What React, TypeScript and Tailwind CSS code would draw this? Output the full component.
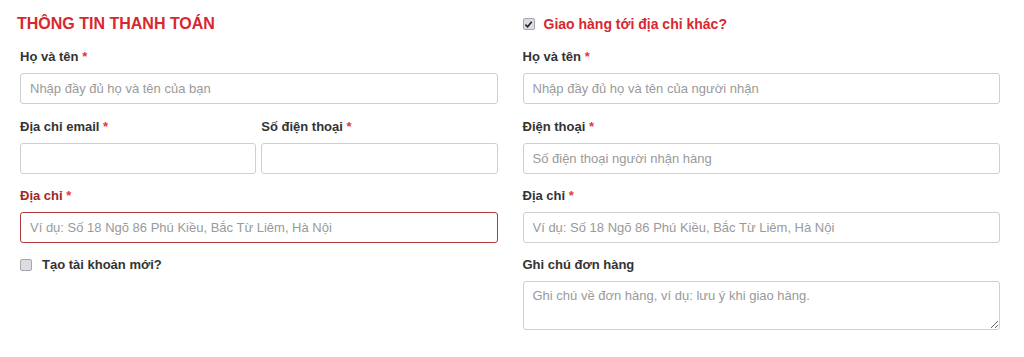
import React from 'react';

const font = "font-['Liberation_Sans',Arial,sans-serif]";

const Label = ({ text, required = true, error = false }: { text: string; required?: boolean; error?: boolean }) => (
  <label className={`block h-[20px] leading-[20px] text-[13px] font-bold ${error ? 'text-[#a32626]' : 'text-[#333]'}`}>
    {text}
    {required && <span className="text-[#e0393e]"> *</span>}
  </label>
);

const Input = ({ placeholder = '', error = false }: { placeholder?: string; error?: boolean }) => (
  <input
    type="text"
    placeholder={placeholder}
    className={`mt-[6px] block h-[31px] w-full rounded-[3px] border bg-white px-[9px] text-[13px] text-[#555] outline-none placeholder:text-[#9a9a9a] ${
      error ? 'border-[#b23a3a]' : 'border-[#cfcfcf]'
    }`}
  />
);

const Box = ({ checked = false }: { checked?: boolean }) => (
  <span className="inline-flex h-[12px] w-[12px] shrink-0 items-center justify-center rounded-[2px] border border-[#a9a6ad] bg-[#dedbe3]">
    {checked && (
      <svg width="9" height="9" viewBox="0 0 10 10">
        <path d="M1.5 5.2 L4 7.6 L8.6 2" fill="none" stroke="#222" strokeWidth="1.8" />
      </svg>
    )}
  </span>
);

const Field = ({ label, placeholder, error, gap = 'mt-[12px]' }: { label: string; placeholder?: string; error?: boolean; gap?: string }) => (
  <div className={gap}>
    <Label text={label} error={error} />
    <Input placeholder={placeholder} error={error} />
  </div>
);

export default function App() {
  return (
    <div className={`${font} min-h-[357px] w-full bg-white pl-[20px] pr-[24px] pt-[12px]`}>
      <div className="grid grid-cols-2 gap-x-[25px]">
        {/* billing */}
        <div className="flex flex-col">
          <h2 className="-ml-[3px] h-[24px] text-[16px] font-bold leading-[24px] text-[#d9272e]">
            THÔNG TIN THANH TOÁN
          </h2>
          <Field gap="mt-[11px]" label="Họ và tên" placeholder="Nhập đầy đủ họ và tên của bạn" />
          <div className="mt-[13px] grid grid-cols-2 gap-x-[5px]">
            <div>
              <Label text="Địa chỉ email" />
              <Input />
            </div>
            <div>
              <Label text="Số điện thoại" />
              <Input />
            </div>
          </div>
          <Field label="Địa chỉ" placeholder="Ví dụ: Số 18 Ngõ 86 Phú Kiều, Bắc Từ Liêm, Hà Nội" error />
          <div className="mt-[12px] flex h-[20px] items-center gap-[10px]">
            <Box />
            <span className="text-[13px] font-bold text-[#333]">Tạo tài khoản mới?</span>
          </div>
        </div>

        {/* shipping */}
        <div className="flex flex-col">
          <div className="flex h-[24px] items-center gap-[9px]">
            <Box checked />
            <span className="text-[14px] font-bold text-[#d9272e]">Giao hàng tới địa chỉ khác?</span>
          </div>
          <Field gap="mt-[11px]" label="Họ và tên" placeholder="Nhập đầy đủ họ và tên của người nhận" />
          <Field gap="mt-[13px]" label="Điện thoại" placeholder="Số điện thoại người nhận hàng" />
          <Field label="Địa chỉ" placeholder="Ví dụ: Số 18 Ngõ 86 Phú Kiều, Bắc Từ Liêm, Hà Nội" />
          <div className="mt-[12px]">
            <Label text="Ghi chú đơn hàng" required={false} />
            <textarea
              placeholder="Ghi chú về đơn hàng, ví dụ: lưu ý khi giao hàng."
              className="mt-[6px] block h-[49px] w-full rounded-[3px] border border-[#cfcfcf] bg-white px-[9px] py-[6px] text-[13px] leading-[16px] text-[#555] outline-none placeholder:text-[#9a9a9a]"
            />
          </div>
        </div>
      </div>
    </div>
  );
}
